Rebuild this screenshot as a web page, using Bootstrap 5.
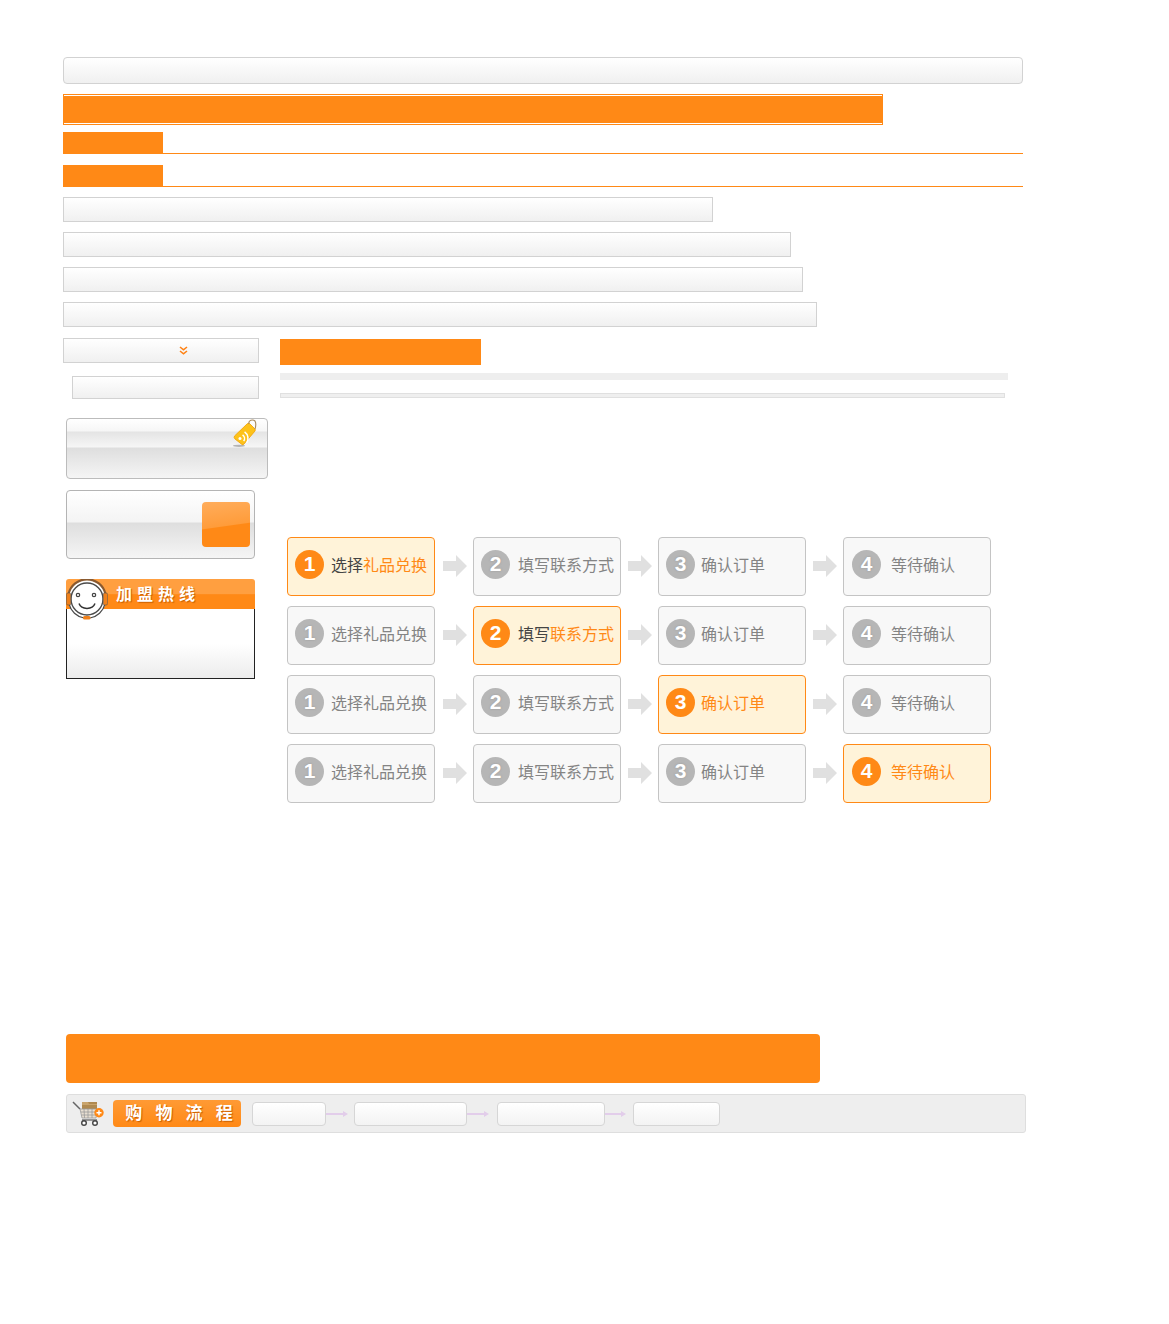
<!DOCTYPE html>
<html lang="zh-CN">
<head>
<meta charset="UTF-8" />
<meta name="viewport" content="width=device-width, initial-scale=1.0" />
<title>样式</title>
<link href="https://cdn.jsdelivr.net/npm/bootstrap@5.3.3/dist/css/bootstrap.min.css" rel="stylesheet" crossorigin="anonymous" />
<style>
  body { background: #fff; font-family: "Liberation Sans", "Noto Sans CJK SC", sans-serif; }
  .sheet { padding: 57px 0 191px 63px; width: 1169px; }

  .grey-fill { background: linear-gradient(#fff, #f0f0f0); border: 1px solid #d2d2d2; }
  .top-box { width: 960px; height: 27px; border-radius: 4px; margin-bottom: 10px; }
  .band { width: 820px; height: 31px; border: 1px solid #ff8916; padding: 1px 0; margin-bottom: 7px; background-clip: content-box; background-color: #ff8916; }
  .tab-line { width: 960px; height: 22px; border-bottom: 1px solid #ff8916; margin-bottom: 11px; }
  .tab-line i { display: block; width: 100px; height: 22px; background: #ff8916; }
  .tab-line.tab-end { margin-bottom: 10px; }
  .strip { height: 25px; margin-bottom: 10px; }
  .w-a { width: 650px; } .w-b { width: 728px; } .w-c { width: 740px; } .w-d { width: 754px; }
  .strip-last { margin-bottom: 11px; }

  .side { width: 217px; flex: none; }
  .drop { width: 196px; height: 25px; margin-bottom: 13px; padding-left: 115px; }
  .field { width: 187px; height: 23px; margin: 0 0 19px 9px; }
  .tag-box { width: 202px; height: 61px; margin: 0 0 11px 3px; border: 1px solid #bcbcbc; border-radius: 4px; padding: 0 10px 0 0;
    background: linear-gradient(#fff 0, #f6f6f6 12px, #e4e4e4 13px, #f6f6f6 28px, #dedede 29px, #f5f5f5 59px); }
  .buy-box { width: 189px; height: 69px; margin: 0 0 20px 3px; border: 1px solid #b4b4b4; border-radius: 4px; padding: 11px 4px 0 0;
    background: linear-gradient(#fff 0, #f4f4f4 31px, #dedede 32px, #f5f5f5 67px); }
  .buy-btn { width: 48px; height: 45px; border-radius: 4px; background: linear-gradient(172deg, #ffad5c 0, #ff9c3a 52%, #ff8916 54%, #ff8916 100%); }
  .hot { width: 189px; height: 100px; margin-left: 3px; position: relative; }
  .hot-head { height: 30px; padding-left: 50px; border-radius: 3px 3px 0 0; background: linear-gradient(#ff9f40 0, #ff9f40 50%, #ff8916 52%); color: #fff;
    font: bold 16px/28px "Noto Sans CJK SC", sans-serif; letter-spacing: 5px; text-shadow: 1px 1px 1px #c85f00; }
  .hot-body { height: 70px; border: 1px solid #222; border-top: 0; background: linear-gradient(#fff 50%, #ececec); }
  .hot-face { position: absolute; left: 0; top: 0; }

  .main { flex: 1; padding-top: 1px; }
  .sub-head { width: 201px; height: 26px; background: #ff8916; margin-bottom: 8px; }
  .sub-a { width: 728px; height: 7px; background: #eee; margin-bottom: 13px; }
  .sub-b { width: 725px; height: 5px; background: #efefef; border: 1px solid #e0e0e0; }

  .steps { margin: 139px 0 0 7px; }
  .step-row { height: 59px; margin-bottom: 10px; }
  .step-row:last-child { margin-bottom: 0; }
  .step { width: 148px; height: 59px; flex: none; padding: 12px 0 0 7px; border: 1px solid #c4c4c4; border-radius: 4px; background: #f8f8f8; color: #848484;
    font: 16px/29px "Noto Sans CJK SC", sans-serif; white-space: nowrap; }
  .step.last { padding-left: 8px; }
  .step-num { width: 29px; height: 29px; flex: none; border-radius: 50%; background: #b6b6b6; color: #fff; text-align: center;
    font: bold 21px/28px "Liberation Sans", sans-serif; text-shadow: 0 0 2px rgba(120, 120, 120, .5); }
  .step em { font-style: normal; }
  .step.on { background: #fff3d9; border-color: #ff8916; color: #ff8916; }
  .step.on .step-num { background: #ff8916; text-shadow: none; }
  .step.on em { color: #444; }
  .ml-7 { margin-left: 7px; } .ml-8 { margin-left: 8px; } .ml-6 { margin-left: 6px; } .ml-10 { margin-left: 10px; }
  .hop { width: 37px; flex: none; padding-left: 7px; margin-bottom: 1px; }
  .hop.wide { width: 38px; padding-left: 8px; }

  .foot-band { width: 754px; height: 49px; margin: 231px 0 11px 3px; background: #ff8916; border-radius: 4px; }
  .flow-bar { width: 960px; height: 39px; margin-left: 3px; padding-left: 5px; background: #eee; border: 1px solid #dedede; border-radius: 3px; }
  .flow-title { width: 128px; height: 27px; margin-left: 7px; padding-left: 4px; border-radius: 4px; background: linear-gradient(#ff9a34, #ff8916); color: #fff; text-align: center;
    font: bold 17px/24px "Noto Sans CJK SC", sans-serif; word-spacing: 9.300px; text-shadow: 1px 1px 1px #c85f00; margin-right: 11px; }
  .flow-node { height: 24px; flex: none; background: linear-gradient(#fff, #f3f3f3); border: 1px solid #d6d6d6; border-radius: 4px; }
  .n-a { width: 74px; } .n-b { width: 113px; } .n-c { width: 108px; } .n-d { width: 87px; }
  .flow-hop { flex: none; }
</style>
</head>
<body>
<div class="sheet">
  <div class="top-box grey-fill"></div>
  <div class="band"></div>
  <div class="tab-line"><i></i></div>
  <div class="tab-line tab-end"><i></i></div>
  <div class="strip w-a grey-fill"></div>
  <div class="strip w-b grey-fill"></div>
  <div class="strip w-c grey-fill"></div>
  <div class="strip w-d grey-fill strip-last"></div>

  <div class="d-flex">
    <div class="side">
      <div class="drop grey-fill d-flex align-items-center">
        <svg width="9" height="9" viewBox="0 0 9 9"><path d="M1 1 4.500 3.800 8 1M1 5 4.500 7.800 8 5" fill="none" stroke="#ff8214" stroke-width="1.600"/></svg>
      </div>
      <div class="field grey-fill"></div>
      <div class="tag-box d-flex justify-content-end">
        <svg width="24" height="28" viewBox="0 0 24 28">
          <ellipse cx="6" cy="26.800" rx="6" ry="1.100" fill="#888" opacity=".6"/>
          <path d="M1.500 17 14 5q1-1 2.500-.5L22 10q.5 1 0 2L11 25q-1 1.200-2 .5L2 20q-1.500-1.500-.5-3z" fill="#fdc21a" stroke="#f0a000" stroke-width=".8"/>
          <path d="M16 5C15 1 20 0 22 2c1 2 1 5 0 8" fill="none" stroke="#a98a5c" stroke-width="1.100"/>
          <circle cx="7" cy="19.500" r="1.500" fill="#fff"/>
          <path d="M7 15a4.500 4.500 0 0 1 4.500 4.500M7 11.500a8 8 0 0 1 8 8" fill="none" stroke="#fff" stroke-width="1.500" transform="rotate(35 7 19.500)"/>
        </svg>
      </div>
      <div class="buy-box d-flex justify-content-end"><div class="buy-btn"></div></div>
      <div class="hot">
        <div class="hot-head">加盟热线</div>
        <div class="hot-body"></div>
        <svg class="hot-face" width="42" height="42" viewBox="0 0 42 42">
          <circle cx="21" cy="20" r="19" fill="#fff"/>
          <path d="M2.500 15A19 19 0 0 1 39.500 15" fill="none" stroke="#8a5a30" stroke-width="2.200"/>
          <path d="M3 25a19 19 0 0 0 15 14M39 25a19 19 0 0 1-15 14" fill="none" stroke="#4a4a4a" stroke-width="1.200"/>
          <circle cx="21" cy="20" r="16" fill="#fff" stroke="#4a4a4a" stroke-width="1.400"/>
          <rect x=".4" y="14" width="4.400" height="12" rx="1.500" fill="#f0801a" stroke="#555" stroke-width=".6"/>
          <rect x="37.200" y="14" width="4.400" height="12" rx="1.500" fill="#f0801a" stroke="#555" stroke-width=".6"/>
          <rect x="17" y="37" width="7.500" height="3.500" rx="1.500" fill="#f0801a"/>
          <circle cx="12" cy="16" r="1.700" fill="#fff" stroke="#444" stroke-width="1.200"/>
          <circle cx="28" cy="16" r="1.700" fill="#fff" stroke="#444" stroke-width="1.200"/>
          <path d="M13 24.500c2.500 6.500 13.500 6.500 16 0" fill="none" stroke="#333" stroke-width="1.500"/>
        </svg>
      </div>
    </div>

    <div class="main">
      <div class="sub-head"></div>
      <div class="sub-a"></div>
      <div class="sub-b"></div>

      <div class="steps" id="steps"></div>
    </div>
  </div>

  <div class="foot-band"></div>
  <div class="flow-bar d-flex align-items-center">
    <svg width="34" height="28" viewBox="0 0 34 28" class="flex-shrink-0">
      <path d="M1 2 8 9" stroke="#666" stroke-width="1.500"/>
      <rect x="10" y="2" width="15" height="7" fill="#b08a50"/><path d="M10 2h6l1 2h8v1H10z" fill="#c9a46c"/>
      <path d="M8 9h17l-1 9H10zM12 9l.5 9M16 9v9M20 9v9M9 12h16M9.500 15h15" fill="#e8dfd2" stroke="#9a9a9a" stroke-width=".8"/>
      <path d="M10 20h15" stroke="#777" stroke-width="1.500"/>
      <circle cx="12" cy="23" r="2.300" fill="#fff" stroke="#444" stroke-width="1.400"/>
      <circle cx="23" cy="23" r="2.300" fill="#fff" stroke="#444" stroke-width="1.400"/>
      <circle cx="27" cy="12.700" r="4.700" fill="#ff8916"/><path d="M24.500 12.700h5M27 10.200v5" stroke="#fff" stroke-width="1.400"/>
    </svg>
    <div class="flow-title flex-shrink-0">购 物 流 程</div>
    <div class="flow-node n-a"></div>
    <svg class="flow-hop" width="28" height="8" viewBox="0 0 28 8"><path d="M0 3h17V1l5 3-5 3V5H0z" fill="#e2cdea"/></svg>
    <div class="flow-node n-b"></div>
    <svg class="flow-hop" width="30" height="8" viewBox="0 0 30 8"><path d="M0 3h17V1l5 3-5 3V5H0z" fill="#e2cdea"/></svg>
    <div class="flow-node n-c"></div>
    <svg class="flow-hop" width="28" height="8" viewBox="0 0 28 8"><path d="M0 3h16V1l5 3-5 3V5H0z" fill="#e2cdea"/></svg>
    <div class="flow-node n-d"></div>
  </div>
</div>

<script src="https://cdn.jsdelivr.net/npm/bootstrap@5.3.3/dist/js/bootstrap.bundle.min.js"></script>
<script>
  // four rows, the active step moves along
  const labels = [
    { num: 1, strong: "选择", rest: "礼品兑换", gap: "ml-7" },
    { num: 2, strong: "填写", rest: "联系方式", gap: "ml-8" },
    { num: 3, strong: "", rest: "确认订单", gap: "ml-6" },
    { num: 4, strong: "", rest: "等待确认", gap: "ml-10" }
  ];
  const arrow = '<svg class="d-block" width="24" height="22" viewBox="0 0 24 22"><path d="M0 6h13V0l11 11-11 11v-6H0z" fill="#e0e0e0"/></svg>';
  let html = "";
  for (let row = 0; row < 4; row++) {
    html += '<div class="step-row d-flex align-items-center">';
    labels.forEach((s, i) => {
      const on = i === row;
      html += `<div class="step d-flex${on ? " on" : ""}${i === 3 ? " last" : ""}"><span class="step-num">${s.num}</span><span class="${s.gap}"><em>${s.strong}</em>${s.rest}</span></div>`;
      if (i < 3) html += `<div class="hop${i === 0 ? " wide" : ""}">${arrow}</div>`;
    });
    html += "</div>";
  }
  document.getElementById("steps").innerHTML = html;
</script>
</body>
</html>
